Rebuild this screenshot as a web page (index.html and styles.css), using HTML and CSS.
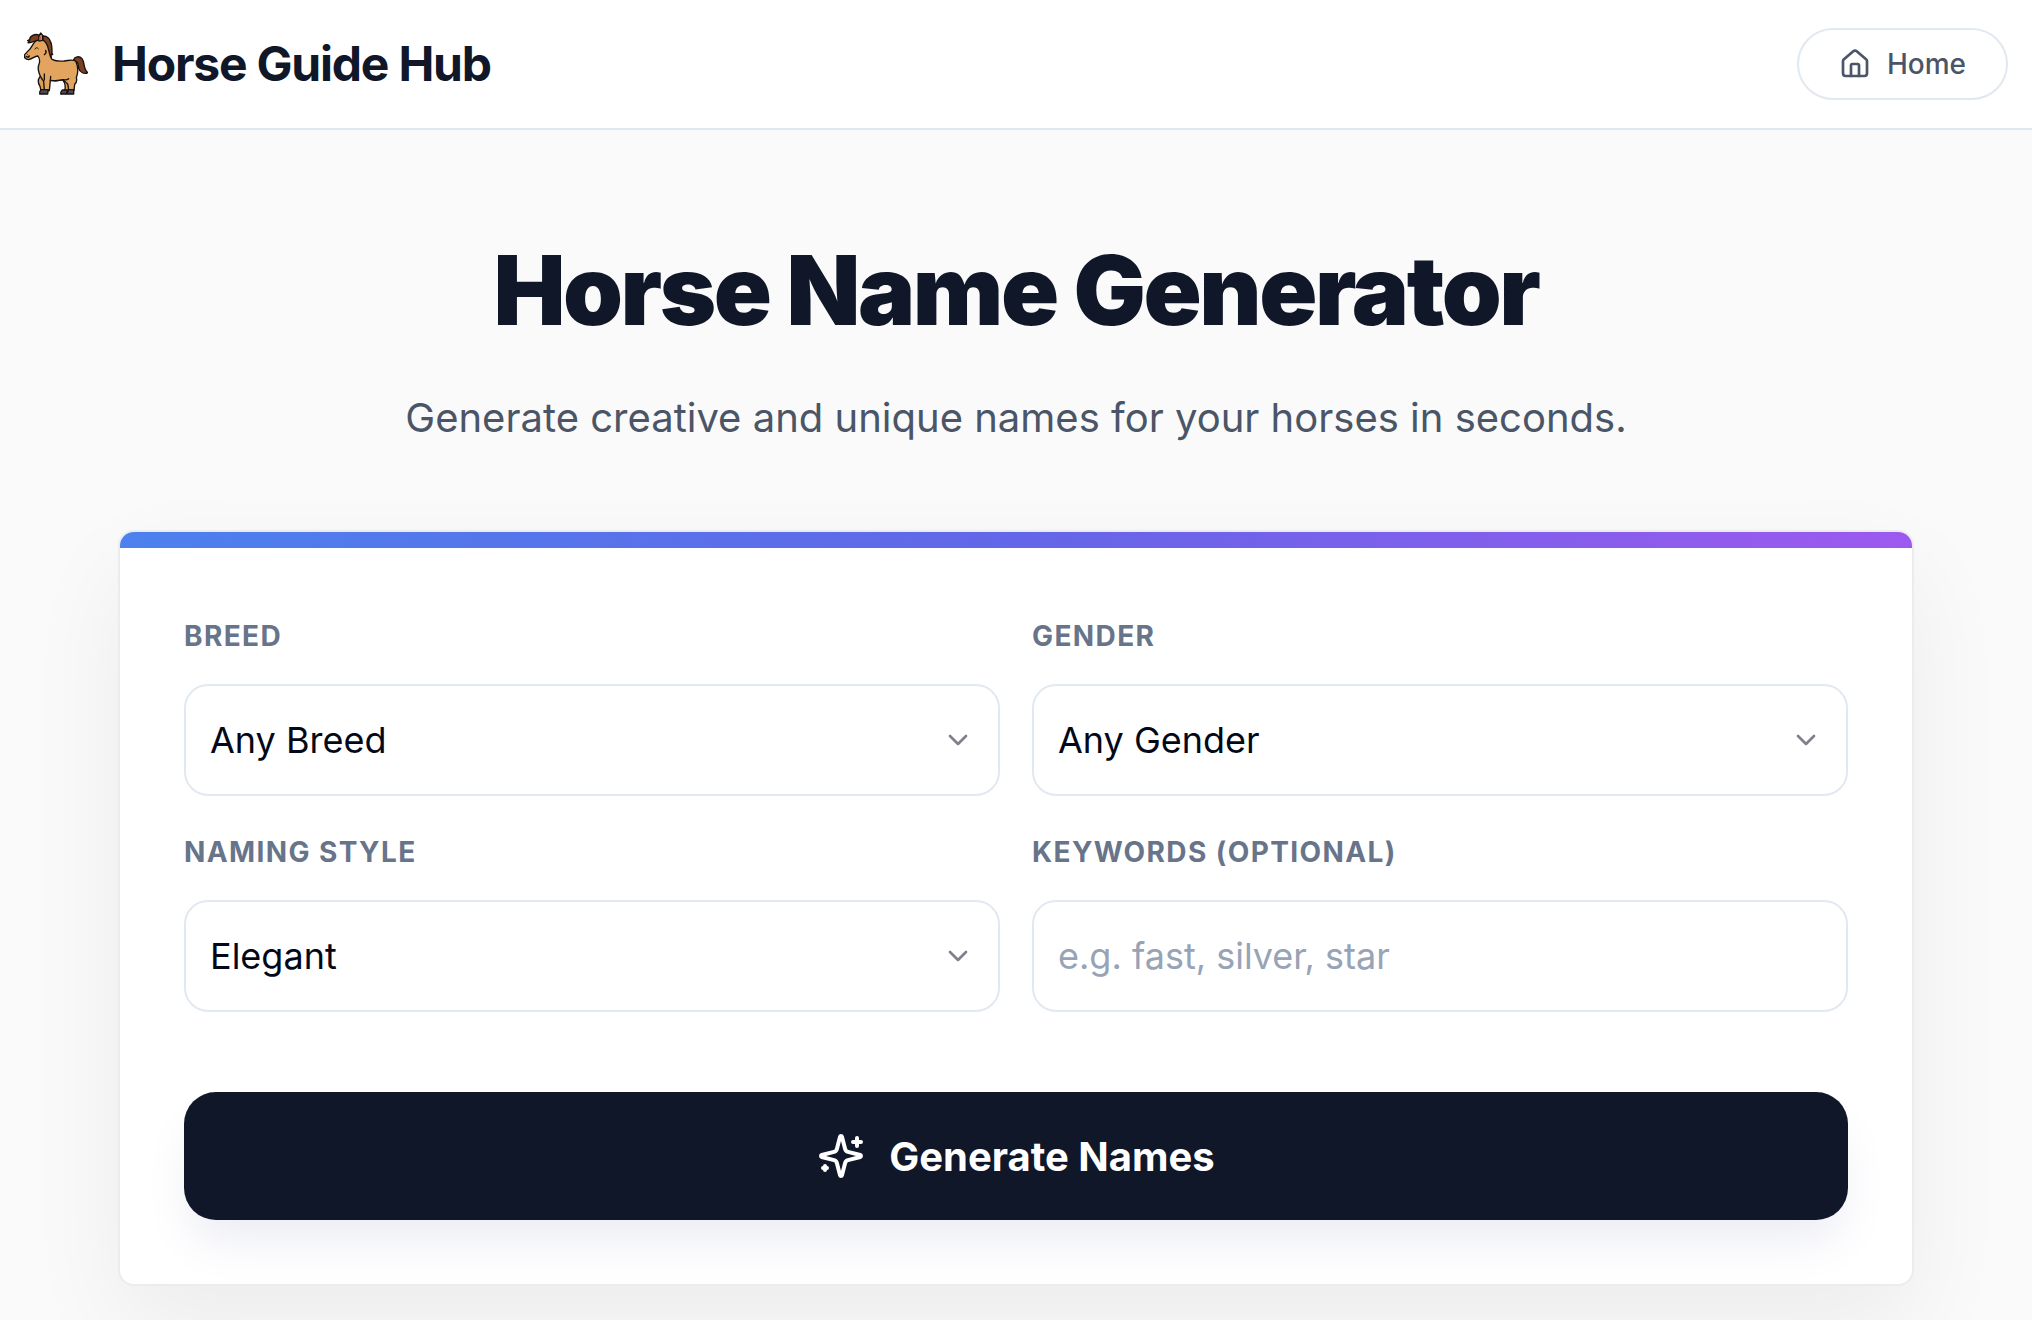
FILE: index.html
```html
<!DOCTYPE html>
<html lang="en">
  <head>
    <meta charset="utf-8">
    <meta name="viewport" content="width=device-width, initial-scale=1">
    <title>Horse Name Generator</title>
    <link rel="stylesheet" href="styles.css">
  </head>

  <body>

    <header class="header">
      <a class="brand" href="#">
        <svg class="brand-logo" viewBox="42 36 192 192" stroke="#17110f" stroke-width="4" stroke-linejoin="round" stroke-linecap="round" aria-hidden="true">
          <!-- tail -->
          <path fill="#7b4022" d="M191 119C194 109 208 107 216 116C225 127 219 146 233 158C224 164 209 157 206 145C204 134 206 127 198 125Z"/>
          <!-- far legs -->
          <path fill="#dc9f58" d="M90 170C82 180 84 190 90 199L93 212H104L103 165ZM159 181C166 190 168 198 164 212H176L180 185Z"/>
          <!-- mane behind the neck -->
          <path fill="#7b4022" d="M99 48C110 47 119 55 121 64C127 74 126 88 126 100L128 104L123 103L124 118L113 108L98 60Z"/>
          <!-- body -->
          <path fill="#e2a45e" d="M76 64C68 72 64 84 58 89L44 104C40 112 47 118 56 119C66 117 73 109 84 108C90 117 90 127 86 136C81 150 88 163 94 174L101 184L103 212H118L121 181C134 183 146 183 160 179C164 187 172 187 174 195L176 212H192L194 193C201 187 201 180 199 173C205 157 204 139 198 125C190 116 176 122 163 123C148 124 139 125 126 118C117 108 118 85 109 70C101 57 85 56 76 64Z"/>
          <path fill="none" d="M103 162V180M122 169L121 181C134 183 146 183 160 179C165 180 172 180 176 176M103 104C109 99 109 94 107 91M48 109L55 112L58 108"/>
          <!-- face -->
          <path fill="none" stroke-width="3" d="M75 87C77 82 82 82 85 86M53 104L54 105"/>
          <!-- forelock and ear -->
          <path fill="#7b4022" d="M88 46C74 39 59 49 59 59L53 62L59 64L54 68C67 70 74 60 89 60Z"/>
          <path fill="#c98a4b" d="M87 47L92 39L98 46L98 61L87 63Z"/>
          <path fill="#d4453f" stroke="none" d="M87 53L92 48V61H87Z"/>
          <!-- hooves -->
          <path fill="#4b4b50" d="M93 209H115L113 222H89C88 216 89 212 93 209ZM157 210H175L171 222H152C152 216 153 212 157 210ZM175 209H191V222H169C169 216 171 212 175 209Z"/>
        </svg>
        <span class="brand-name">Horse Guide Hub</span>
      </a>
      <a class="home-link" href="#">
        <svg class="icon" viewBox="0 0 24 24" aria-hidden="true">
          <path d="M15 21v-8a1 1 0 0 0-1-1h-4a1 1 0 0 0-1 1v8"/>
          <path d="M3 10a2 2 0 0 1 .709-1.528l7-5.999a2 2 0 0 1 2.582 0l7 5.999A2 2 0 0 1 21 10v9a2 2 0 0 1-2 2H5a2 2 0 0 1-2-2z"/>
        </svg>
        Home
      </a>
    </header>

    <main class="main">
      <div class="hero">
        <h1 class="title">Horse Name Generator</h1>
        <p class="subtitle">Generate creative and unique names for your horses in seconds.</p>
      </div>

      <div class="card">
        <div class="card-bar"></div>
        <form class="form">
          <div class="fields">
            <div class="field">
              <label class="label" for="breed">Breed</label>
              <div class="select">
                <select class="control" id="breed">
                  <option>Any Breed</option>
                </select>
                <svg class="icon chevron" viewBox="0 0 24 24" aria-hidden="true"><path d="m6 9 6 6 6-6"/></svg>
              </div>
            </div>

            <div class="field">
              <label class="label" for="gender">Gender</label>
              <div class="select">
                <select class="control" id="gender">
                  <option>Any Gender</option>
                </select>
                <svg class="icon chevron" viewBox="0 0 24 24" aria-hidden="true"><path d="m6 9 6 6 6-6"/></svg>
              </div>
            </div>

            <div class="field">
              <label class="label" for="style">Naming Style</label>
              <div class="select">
                <select class="control" id="style">
                  <option>Elegant</option>
                </select>
                <svg class="icon chevron" viewBox="0 0 24 24" aria-hidden="true"><path d="m6 9 6 6 6-6"/></svg>
              </div>
            </div>

            <div class="field">
              <label class="label" for="keywords">Keywords (Optional)</label>
              <input class="control" id="keywords" type="text" placeholder="e.g. fast, silver, star">
            </div>
          </div>

          <button class="generate" type="button">
            <svg class="icon sparkles" viewBox="0 0 24 24" aria-hidden="true">
              <path d="M9.937 15.5A2 2 0 0 0 8.5 14.063l-6.135-1.582a.5.5 0 0 1 0-.962L8.5 9.936A2 2 0 0 0 9.937 8.5l1.582-6.135a.5.5 0 0 1 .963 0L14.063 8.5A2 2 0 0 0 15.5 9.937l6.135 1.581a.5.5 0 0 1 0 .964L15.5 14.063a2 2 0 0 0-1.437 1.437l-1.582 6.135a.5.5 0 0 1-.963 0z"/>
              <path d="M20 3v4M22 5h-4M4 17v2M5 18H3"/>
            </svg>
            Generate Names
          </button>
        </form>
      </div>
    </main>

  </body>
</html>
```

FILE: styles.css
```css
* {
  box-sizing: border-box;
}

body {
  margin: 0;
  background: #fafafa;
  color: #101729;
  font-family: Inter, "Liberation Sans", sans-serif;
}

.header {
  display: flex;
  align-items: center;
  justify-content: space-between;
  padding: 28px 24px;
  background: #fff;
  border-bottom: 2px solid #e2e8f0;
}

.brand {
  display: flex;
  align-items: center;
  gap: 24px;
  color: #101729;
  text-decoration: none;
}

.brand-logo {
  width: 64px;
  height: 64px;
}

.brand-name {
  font-size: 48px;
  line-height: 64px;
  font-weight: 700;
  letter-spacing: -0.025em;
}

.home-link {
  display: flex;
  align-items: center;
  gap: 16px;
  height: 72px;
  padding: 0 40px;
  border: 2px solid #e2e8f0;
  border-radius: 36px;
  color: #4a5567;
  font-size: 28px;
  font-weight: 500;
  text-decoration: none;
}

.icon {
  width: 32px;
  height: 32px;
  fill: none;
  stroke: currentColor;
  stroke-width: 2;
  stroke-linecap: round;
  stroke-linejoin: round;
}

.main {
  max-width: 1844px;
  margin: 0 auto;
  padding: 112px 24px 64px;
}

.hero {
  margin-bottom: 80px;
  text-align: center;
}

.title {
  margin: 0 0 48px;
  font-size: 96px;
  line-height: 96px;
  font-weight: 900;
  letter-spacing: -0.025em;
}

.subtitle {
  margin: 0;
  color: #4a5567;
  font-size: 40px;
  line-height: 64px;
}

.card {
  overflow: hidden;
  background: #fff;
  border: 2px solid #ebebf2;
  border-radius: 16px;
  box-shadow: 0 40px 100px rgba(0, 0, 0, 0.06);
}

.card-bar {
  height: 16px;
  background: linear-gradient(to right, #4c81ee, #6366e8, #9d59ef);
}

.form {
  padding: 64px;
}

.fields {
  display: grid;
  grid-template-columns: 1fr 1fr;
  gap: 32px;
  margin-bottom: 80px;
}

.field {
  display: flex;
  flex-direction: column;
  gap: 24px;
}

.label {
  color: #67748a;
  font-size: 28px;
  line-height: 48px;
  font-weight: 700;
  letter-spacing: 0.05em;
  text-transform: uppercase;
}

.select {
  position: relative;
}

.control {
  display: block;
  width: 100%;
  height: 112px;
  padding: 0 24px;
  appearance: none;
  background: #fff;
  border: 2px solid #e2e8f0;
  border-radius: 24px;
  color: #020817;
  font-family: inherit;
  font-size: 36px;
}

.control::placeholder {
  color: #97a3b6;
}

/* sits on top of the select, which has no arrow of its own */
.chevron {
  position: absolute;
  top: 40px;
  right: 26px;
  color: #020817;
  opacity: 0.5;
  pointer-events: none;
}

.generate {
  display: flex;
  align-items: center;
  justify-content: center;
  gap: 24px;
  width: 100%;
  height: 128px;
  border: 0;
  border-radius: 32px;
  background: #101729;
  box-shadow: 0 28px 50px -8px #ebecf4;
  color: #fff;
  font-family: inherit;
  font-size: 40px;
  font-weight: 700;
}

.sparkles {
  width: 48px;
  height: 48px;
}
```
